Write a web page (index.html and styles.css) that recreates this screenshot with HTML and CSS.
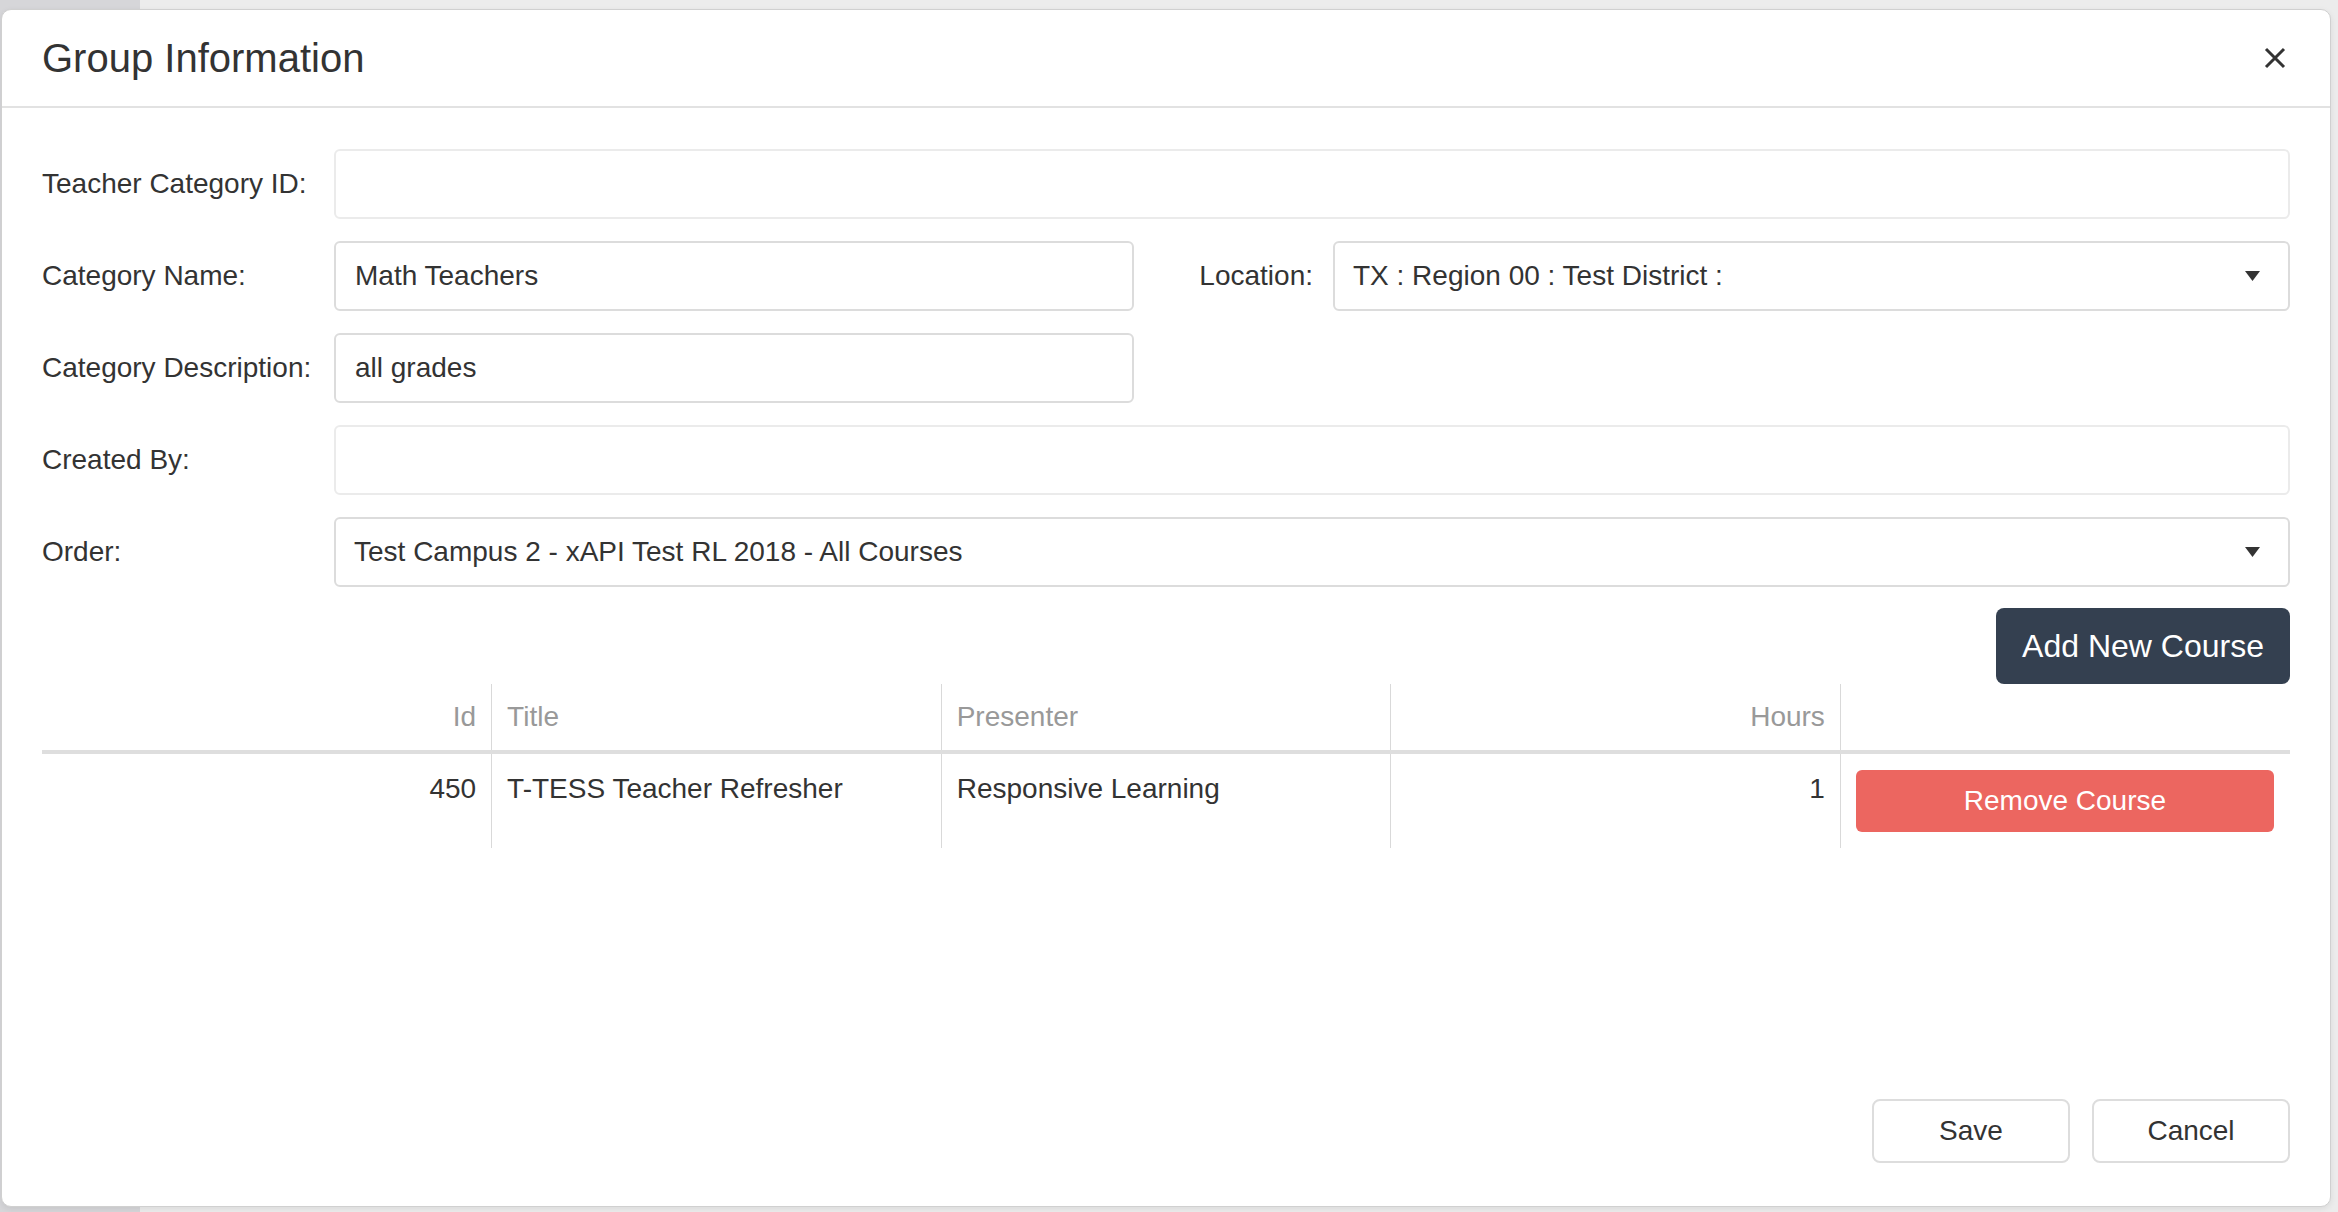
FILE: index.html
```html
<!DOCTYPE html>
<html>
<head lang="en">
    <meta charset="UTF-8">
    <title>Group Information</title>
    <link rel="stylesheet" href="styles.css">
</head>
<body>
<div class="page">
    <div class="bg-tab"></div>
    <div class="modal">
        <!--header-->
        <div class="modal-header">
            <h4 class="modal-title">Group Information</h4>
            <button class="close" type="button">
                <svg width="22" height="22" viewBox="0 0 22 22">
                    <path d="M2 2 L20 20 M20 2 L2 20" stroke="#333" stroke-width="3" fill="none"/>
                </svg>
            </button>
        </div>
        <!--form-->
        <div class="modal-body">
            <div class="form-row">
                <label class="form-label">Teacher Category ID:</label>
                <input class="form-input readonly" type="text" value="">
            </div>
            <div class="form-row split">
                <label class="form-label">Category Name:</label>
                <input class="form-input" type="text" value="Math Teachers">
                <label class="form-label right">Location:</label>
                <div class="form-select">
                    <span>TX : Region 00 : Test District :</span>
                    <svg class="caret" width="15" height="10" viewBox="0 0 15 10"><polygon points="0,0 15,0 7.5,10" fill="#333"/></svg>
                </div>
            </div>
            <div class="form-row split">
                <label class="form-label">Category Description:</label>
                <input class="form-input" type="text" value="all grades">
            </div>
            <div class="form-row">
                <label class="form-label">Created By:</label>
                <input class="form-input readonly" type="text" value="">
            </div>
            <div class="form-row">
                <label class="form-label">Order:</label>
                <div class="form-select">
                    <span>Test Campus 2 - xAPI Test RL 2018 - All Courses</span>
                    <svg class="caret" width="15" height="10" viewBox="0 0 15 10"><polygon points="0,0 15,0 7.5,10" fill="#333"/></svg>
                </div>
            </div>
            <div class="actions">
                <button class="btn-dark" type="button">Add New Course</button>
            </div>
            <!--courses-->
            <table class="course-table">
                <thead>
                <tr>
                    <th class="num">Id</th>
                    <th>Title</th>
                    <th>Presenter</th>
                    <th class="num">Hours</th>
                    <th></th>
                </tr>
                </thead>
                <tbody>
                <tr>
                    <td class="num">450</td>
                    <td>T-TESS Teacher Refresher</td>
                    <td>Responsive Learning</td>
                    <td class="num">1</td>
                    <td class="btn-cell"><button class="btn-red" type="button">Remove Course</button></td>
                </tr>
                </tbody>
            </table>
        </div>
        <!--footer-->
        <div class="modal-footer">
            <button class="btn-light" type="button">Save</button>
            <button class="btn-light" type="button">Cancel</button>
        </div>
    </div>
</div>
</body>
</html>
```

FILE: styles.css
```css
/*page*/
html, body{
    margin: 0;
    height: 100%;
}
body{
    background-color: #ececec;
    font-family: "Liberation Sans", Arial, sans-serif;
    color: #333;
}
.page{
    height: 100vh;
    box-sizing: border-box;
    padding: 9px 7px 5px 1px;
    display: flex;
    position: relative;
}
.bg-tab{
    position: absolute;
    left: 0;
    top: 0;
    width: 140px;
    height: 100%;
    background-color: #d6d6d9;
}
/*modal*/
.modal{
    position: relative;
    flex: 1;
    display: flex;
    flex-direction: column;
    background-color: #fff;
    border: 1px solid #d0d0d0;
    border-radius: 10px;
    box-shadow: 0 2px 6px rgba(0,0,0,0.08);
}
.modal-header{
    display: flex;
    align-items: center;
    justify-content: space-between;
    padding: 26px 40px 26px 40px;
    border-bottom: 2px solid #e2e2e2;
}
.modal-title{
    margin: 0;
    font-size: 40px;
    font-weight: normal;
    line-height: 44px;
    color: #333;
}
.close{
    border: none;
    background: none;
    padding: 0;
    margin-right: 4px;
    width: 22px;
    height: 22px;
    cursor: pointer;
}
.close svg{
    display: block;
}
.modal-body{
    padding: 41px 40px 0 40px;
}
/*form*/
.form-row{
    display: grid;
    grid-template-columns: 292px 1fr;
    align-items: center;
    margin-bottom: 22px;
}
.form-row.split{
    grid-template-columns: 292px 800px 1fr 957px;
}
.form-label{
    font-size: 28px;
    color: #333;
}
.form-label.right{
    text-align: right;
    padding-right: 20px;
}
.form-input{
    height: 70px;
    box-sizing: border-box;
    border: 2px solid #dcdcdc;
    border-radius: 6px;
    padding: 0 19px;
    font-family: "Liberation Sans", Arial, sans-serif;
    font-size: 28px;
    color: #333;
    background-color: #fff;
    outline: none;
}
.form-input.readonly{
    border-color: #ebebeb;
}
.form-select{
    height: 70px;
    box-sizing: border-box;
    border: 2px solid #dcdcdc;
    border-radius: 6px;
    padding: 0 28px 0 18px;
    display: flex;
    align-items: center;
    justify-content: space-between;
    font-size: 28px;
    color: #333;
}
.caret{
    display: block;
}
.actions{
    display: flex;
    justify-content: flex-end;
    margin-top: -1px;
}
.btn-dark{
    height: 76px;
    padding: 0 26px;
    border: none;
    border-radius: 8px;
    background-color: #344050;
    color: #fff;
    font-family: "Liberation Sans", Arial, sans-serif;
    font-size: 32px;
    cursor: pointer;
}
/*table*/
.course-table{
    width: 100%;
    table-layout: fixed;
    border-collapse: collapse;
    font-size: 28px;
}
.course-table th{
    padding: 13px 15px;
    line-height: 40px;
    font-weight: normal;
    color: #999;
    text-align: left;
    border-bottom: 4px solid #dedede;
}
.course-table td{
    padding: 15px 15px;
    line-height: 40px;
    vertical-align: top;
    color: #333;
}
.course-table th + th,
.course-table td + td{
    border-left: 1px solid #d9d9d9;
}
.course-table .num{
    text-align: right;
}
.course-table td.btn-cell{
    padding: 16px 16px 16px 15px;
}
.btn-red{
    width: 100%;
    height: 62px;
    border: none;
    border-radius: 6px;
    background-color: #ec6660;
    color: #fff;
    font-family: "Liberation Sans", Arial, sans-serif;
    font-size: 28px;
    cursor: pointer;
}
/*footer*/
.modal-footer{
    margin-top: auto;
    display: flex;
    justify-content: flex-end;
    gap: 22px;
    padding: 0 40px 43px 40px;
}
.btn-light{
    width: 198px;
    height: 64px;
    border: 2px solid #dddddd;
    border-radius: 8px;
    background-color: #fff;
    color: #333;
    font-family: "Liberation Sans", Arial, sans-serif;
    font-size: 28px;
    cursor: pointer;
}
```
